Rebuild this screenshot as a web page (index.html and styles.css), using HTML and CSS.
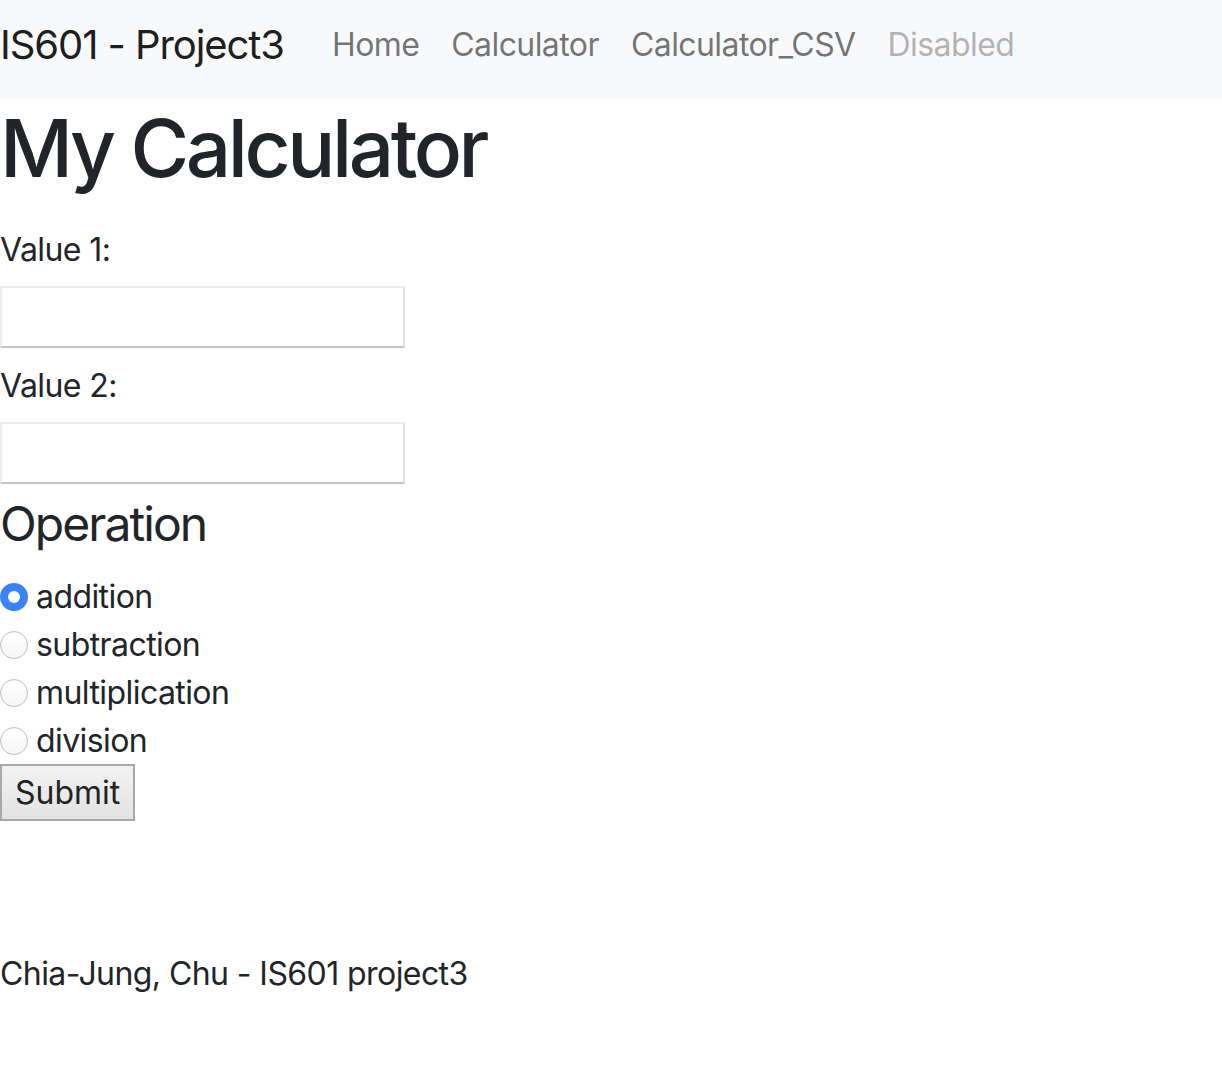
FILE: index.html
```html
<!DOCTYPE html>
<html lang="en">
<head>
<meta charset="utf-8">
<title>My Calculator</title>
<link rel="stylesheet" href="styles.css">
</head>
<body>
<nav class="navbar">
  <a class="brand" href="#">IS601 - Project3</a>
  <ul class="nav">
    <li><a class="nav-link" href="#">Home</a></li>
    <li><a class="nav-link" href="#">Calculator</a></li>
    <li><a class="nav-link" href="#">Calculator_CSV</a></li>
    <li><a class="nav-link disabled" href="#">Disabled</a></li>
  </ul>
</nav>
<main class="content">
  <h1 class="title">My Calculator</h1>
  <form class="calc">
    <label class="field-label" for="v1">Value 1:</label>
    <input class="field" id="v1" type="text">
    <label class="field-label" for="v2">Value 2:</label>
    <input class="field" id="v2" type="text">
    <h3 class="op-title">Operation</h3>
    <div class="ops">
      <label class="op"><span class="radio checked"></span>addition</label>
      <label class="op"><span class="radio"></span>subtraction</label>
      <label class="op"><span class="radio"></span>multiplication</label>
      <label class="op"><span class="radio"></span>division</label>
    </div>
    <button class="submit" type="button">Submit</button>
  </form>
  <footer class="footer">Chia-Jung, Chu - IS601 project3</footer>
</main>
</body>
</html>
```

FILE: styles.css
```css
html, body {
  margin: 0;
  padding: 0;
  background: #fff;
}
body {
  font-family: Inter, "Liberation Sans", sans-serif;
  color: #212529;
  font-size: 32px;
  line-height: 48px;
  letter-spacing: -0.018em;
}
.navbar {
  box-sizing: border-box;
  display: flex;
  align-items: center;
  height: 99px;
  padding-bottom: 10px;
  background: #f8f9fa;
}
.brand {
  font-size: 40px;
  line-height: 60px;
  letter-spacing: -0.027em;
  color: rgba(0, 0, 0, 0.9);
  text-decoration: none;
  margin-right: 32px;
}
.nav {
  display: flex;
  list-style: none;
  margin: 0;
  padding: 0;
}
.nav-link {
  display: block;
  padding: 0 16px;
  color: rgba(0, 0, 0, 0.55);
  text-decoration: none;
}
.nav-link.disabled {
  color: rgba(0, 0, 0, 0.3);
}
.content {
  display: flex;
  flex-direction: column;
}
.title {
  font-size: 80px;
  font-weight: 500;
  line-height: 96px;
  letter-spacing: -0.043em;
  margin: 0;
  padding-top: 1px;
}
.calc {
  display: flex;
  flex-direction: column;
  align-items: flex-start;
  margin-top: 30px;
}
.field-label {
  display: block;
}
.field {
  box-sizing: border-box;
  width: 405px;
  height: 62px;
  margin: 12px 0 14px;
  border: 2px solid #ececec;
  border-bottom-color: #c2c2c2;
  border-right-color: #e2e2e2;
  background: #fff;
  padding: 0 4px;
  font: inherit;
}
.op-title {
  font-size: 48px;
  font-weight: 400;
  line-height: 58px;
  letter-spacing: -0.04em;
  margin: -3px 0 20px;
}
.ops {
  display: flex;
  flex-direction: column;
}
.op {
  display: flex;
  align-items: center;
  height: 48px;
}
.radio {
  box-sizing: border-box;
  width: 28px;
  height: 28px;
  border-radius: 50%;
  border: 1px solid #bdbdbd;
  background: linear-gradient(#fff, #f6f6f6);
  margin-right: 8px;
  flex: none;
}
.radio.checked {
  border: 8px solid #3a82f7;
  background: #fff;
}
.submit {
  box-sizing: border-box;
  height: 57px;
  padding: 0 13px;
  border: 2px solid #a8a8a8;
  background: linear-gradient(#f1f1f1, #e3e3e3);
  font: inherit;
  color: #222;
  margin: -1px 0 0;
}
.footer {
  margin-top: 129px;
}
```
